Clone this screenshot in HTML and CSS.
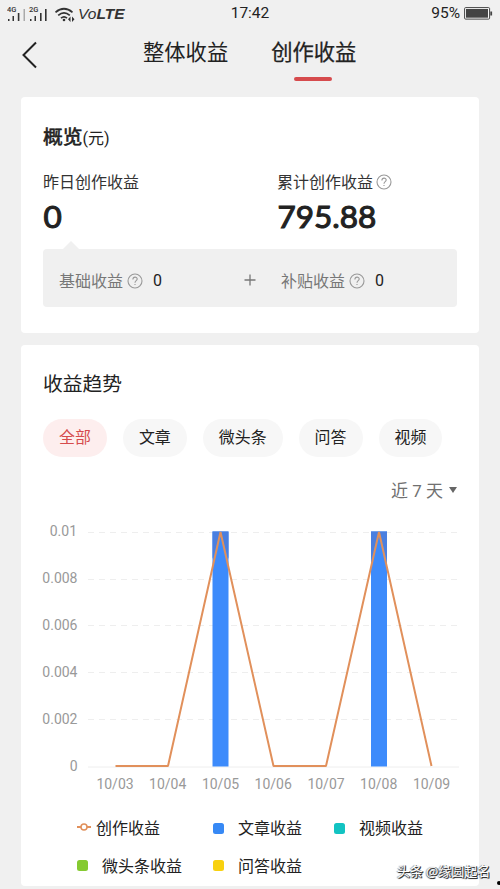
FILE: index.html
```html
<!DOCTYPE html>
<html lang="zh-CN">
<head>
<meta charset="utf-8">
<title>创作收益</title>
<link rel="stylesheet" href="styles.css">
</head>
<body>
<div class="app">
  <header class="status">
    <div class="status-left">
      <svg class="signals" width="76" height="18" viewBox="0 0 76 18">
        <g fill="#333">
          <text class="net" x="0" y="6.5">4G</text>
          <text class="net" x="22" y="6.5">2G</text>
          <path d="M1 14h1.5v2H1zM5.5 11H7v5H5.5zM10.8 8h1.6v8h-1.6zM23 14h1.5v2H23zM27.5 11H29v5h-1.5zM33 8h1.6v8H33zM38 4h1.6v12H38z"/>
          <path d="M16.5 4H18v12h-1.5z" fill="#aaa"/>
        </g>
        <g fill="none" stroke="#333" stroke-width="1.7">
          <path d="M48.5 7.3Q57 .2 65.500 7.300M51.200 10.300Q57 5.300 62.800 10.300M54 13.200Q57 10.500 60 13.200"/>
        </g>
        <circle cx="57" cy="15" r="1.3" fill="#333"/>
        <path d="M63.500 11.500v5.500l-2.500-2.700zM65 11.500V17l2.500-2.700z" fill="#333"/>
      </svg>
      <span class="volte"><span class="vo">Vo</span>LTE</span>
    </div>
    <time class="clock">17:42</time>
    <div class="battery"><span>95%</span>
      <svg width="29" height="13" viewBox="0 0 29 13"><rect x=".6" y=".6" width="25" height="11.500" rx="1" fill="#f8f8f8" stroke="#444" stroke-width="1"/><path d="M2 2h22v8.700H2z" fill="#444"/><path d="M26.300 4.500h1.800v4h-1.800z" fill="#444"/></svg>
    </div>
  </header>
  <nav class="nav">
    <svg class="back" width="18" height="28" viewBox="0 0 18 28"><path d="M16 1.500 3.500 14 16 26.500" fill="none" stroke="#222" stroke-width="2"/></svg>
    <span class="tab">整体收益</span>
    <span class="tab active">创作收益</span>
  </nav>

  <section class="card overview">
    <h2 class="title"><b>概览</b><small>(元)</small></h2>
    <div class="metrics">
      <div class="metric"><div class="label">昨日创作收益</div><div class="value">0</div></div>
      <div class="metric"><div class="label">累计创作收益<svg class="help" viewBox="0 0 16 16"><circle cx="8" cy="8" r="7"/><path d="M5.900 6.500C5.900 3.300 10.200 3.500 10.200 6.100 10.200 7.700 8 7.700 8 9.700M8 10.900v1.200"/></svg></div><div class="value">795.88</div></div>
    </div>
    <div class="detail">
      <div class="part base">基础收益<svg class="help" viewBox="0 0 16 16"><circle cx="8" cy="8" r="7"/><path d="M5.900 6.500C5.900 3.300 10.200 3.500 10.200 6.100 10.200 7.700 8 7.700 8 9.700M8 10.900v1.200"/></svg><span class="amount">0</span></div>
      <svg class="plus" width="12" height="12" viewBox="0 0 12 12"><path d="M6 .5v11M.5 6h11" stroke="#777" stroke-width="1.300"/></svg>
      <div class="part">补贴收益<svg class="help" viewBox="0 0 16 16"><circle cx="8" cy="8" r="7"/><path d="M5.900 6.500C5.900 3.300 10.200 3.500 10.200 6.100 10.200 7.700 8 7.700 8 9.700M8 10.900v1.200"/></svg><span class="amount">0</span></div>
    </div>
  </section>

  <section class="card trend">
    <h2 class="trend-title">收益趋势</h2>
    <div class="chips">
      <span class="chip on">全部</span><span class="chip">文章</span><span class="chip">微头条</span><span class="chip">问答</span><span class="chip">视频</span>
    </div>
    <div class="range">近 7 天<i class="caret"></i></div>
    <svg class="chart" width="436" height="286" viewBox="32 515 436 286">
      <path class="grid" d="M88 532.500H459M88 579.500H459M88 625.500H459M88 672.500H459M88 719.500H459"/>
      <path d="M88 767H459" stroke="#eee"/>
      <g fill="#3d8bfb"><rect x="212.500" y="531.500" width="16" height="235"/><rect x="371" y="531.500" width="16" height="235"/></g>
      <g fill="#4a7fe0" ><path d="M212.500 531.500h16v27.500L220.500 532l-8 27zM371 531.500h16V559l-8-27-8 27z"/></g>
      <path d="M115.500 766H168L220.500 532 273.500 766H326L379 532 431.500 766" fill="none" stroke="#e1905b" stroke-width="2" stroke-linejoin="bevel"/>
      <g class="axis" text-anchor="end">
        <text x="77" y="536">0.01</text><text x="77.500" y="583">0.008</text><text x="77.500" y="630">0.006</text><text x="77.500" y="677">0.004</text><text x="77.500" y="723.500">0.002</text><text x="77.500" y="771">0</text>
      </g>
      <g class="axis" text-anchor="middle">
        <text x="115" y="789">10/03</text><text x="167.700" y="789">10/04</text><text x="220.500" y="789">10/05</text><text x="273.200" y="789">10/06</text><text x="326" y="789">10/07</text><text x="378.700" y="789">10/08</text><text x="431.500" y="789">10/09</text>
      </g>
    </svg>
    <div class="legend">
      <div class="key line"><svg width="14" height="8" viewBox="0 0 14 8"><path d="M0 4h4M10 4h4" stroke="#e1905b" stroke-width="1.800"/><circle cx="7" cy="4" r="3" fill="#fff" stroke="#e1905b" stroke-width="1.500"/></svg>创作收益</div>
      <div class="key"><i class="dot blue"></i>文章收益</div>
      <div class="key"><i class="dot teal"></i>视频收益</div>
      <div class="key"><i class="dot green"></i>微头条收益</div>
      <div class="key"><i class="dot yellow"></i>问答收益</div>
    </div>
  </section>
  <div class="watermark">头条 @缘圆起名</div>
  <i class="speck"></i>
</div>
</body>
</html>
```
FILE: styles.css
```css
* { box-sizing: border-box; }
body { margin: 0; background: #f0f0f0; color: #222; font-family: Roboto, "Noto Sans CJK SC", sans-serif; }
.app { position: relative; width: 500px; height: 889px; overflow: hidden; }
.status { display: grid; grid-template-columns: 1fr auto 1fr; align-items: center; height: 26px; padding: 0 7px; }
.status-left { display: flex; align-items: center; }
.signals { display: block; margin-top: 1px; flex: none; }
.net { font: 500 7.5px Roboto, sans-serif; }
.volte { margin-left: -5px; font: italic 700 15.500px/20px "Liberation Sans", sans-serif; color: #333; margin-top: 1px; }
.vo { font-weight: 400; }
.clock { font-size: 15.500px; color: #222; }
.battery { display: flex; justify-content: flex-end; align-items: center; gap: 4px; font-size: 15.500px; }
.battery span { line-height: 18px; margin-bottom: 1px; }
.nav { display: flex; height: 71px; padding: 10px 0 0 20px; }
.back { margin: 5px 105px 0 0; flex: none; }
.tab { position: relative; height: 34px; font-size: 21.300px; line-height: 34px; margin-right: 43px; white-space: nowrap; }
.tab.active { -webkit-text-stroke: .25px #222; }
.tab.active::after { content: ""; position: absolute; left: 23px; top: 41px; width: 38px; height: 4px; border-radius: 2px; background: #d64b4d; }
.card { width: 458px; margin-left: 21px; border-radius: 4px; background: #fff; }
.overview { height: 236px; padding: 26px 22px 0; }
.title { display: flex; align-items: baseline; margin: 0; height: 30px; font-size: 19.800px; line-height: 30px; }
.title b { font-weight: 400; -webkit-text-stroke: .6px #222; }
.title small { font-size: 16px; font-weight: 400; }
.metrics { display: grid; grid-template-columns: 234px 1fr; margin-top: 16px; }
.label { display: flex; align-items: center; height: 24px; font-size: 16px; color: #333; }
.value { height: 42px; font: 400 31.500px/42px Lato, sans-serif; -webkit-text-stroke: 1.100px #222; color: #222; margin-top: 2px; padding-left: .5px; }
.help { width: 16px; height: 16px; margin: 1px 0 0 4px; fill: none; stroke: #999; stroke-width: 1.100; flex: none; }
.metric .help { margin-left: 3px; }
.detail { position: relative; display: flex; align-items: center; height: 58px; margin-top: 12px; padding: 4px 0 0 16px; border-radius: 4px; background: #f0f0f0; }
.detail::before { content: ""; position: absolute; left: 20px; top: -8px; border: 8px solid transparent; border-top: 0; border-bottom-color: #f0f0f0; }
.part { display: flex; align-items: center; font-size: 16px; color: #777; }
.base { width: 185px; }
.amount { margin-left: 10px; color: #222; font-size: 16px; }
.plus { margin-right: 25px; }
.trend { height: 541px; margin-top: 12px; padding: 25px 20px 0 22px; }
.trend-title { margin: 0; font-size: 19.800px; line-height: 30px; font-weight: 400; }
.chips { display: flex; gap: 16px; margin-top: 19px; }
.chip { height: 38px; padding: 0 16px; border-radius: 19px; background: #f7f7f7; font-size: 15.950px; line-height: 37px; }
.chip.on { background: #fdeeee; color: #d64b4d; }
.range { display: flex; align-items: center; justify-content: flex-end; height: 24px; margin-top: 20px; font-size: 17px; color: #707070; }
.caret { border: 4px solid transparent; border-bottom: 0; border-top: 6px solid #666; margin: 2px 2px 0 6px; }
.chart { display: block; margin: 14px 0 0 -11px; }
.grid { stroke: #eee; stroke-width: 1; stroke-dasharray: 6 5; }
.axis { font: 14px Roboto, sans-serif; fill: #999; }
.legend { display: grid; grid-template-columns: 136px 121px auto; grid-auto-rows: 37.500px; margin: 7px 0 0 34px; font-size: 16px; }
.key { display: flex; align-items: center; height: 38px; white-space: nowrap; }
.key.line svg { margin-right: 5px; }
.dot { width: 11px; height: 11px; margin: 2px 14px 0 0; border-radius: 2.500px; }
.blue { background: #3789f5; }
.teal { background: #12c3c2; }
.green { background: #85ca31; }
.yellow { background: #f8d10f; }
.watermark { position: absolute; left: 397px; top: 860px; font: 13px/22px "Noto Sans CJK SC", sans-serif; color: #fff; white-space: nowrap; text-shadow: 1px 1px 0 #333, 1px 0 0 #666, 0 1px 1px #555, -1px 0 1px #999; }
.speck { position: absolute; left: 497px; top: 881px; width: 4px; height: 4px; border-radius: 2px; background: #000; }
```
